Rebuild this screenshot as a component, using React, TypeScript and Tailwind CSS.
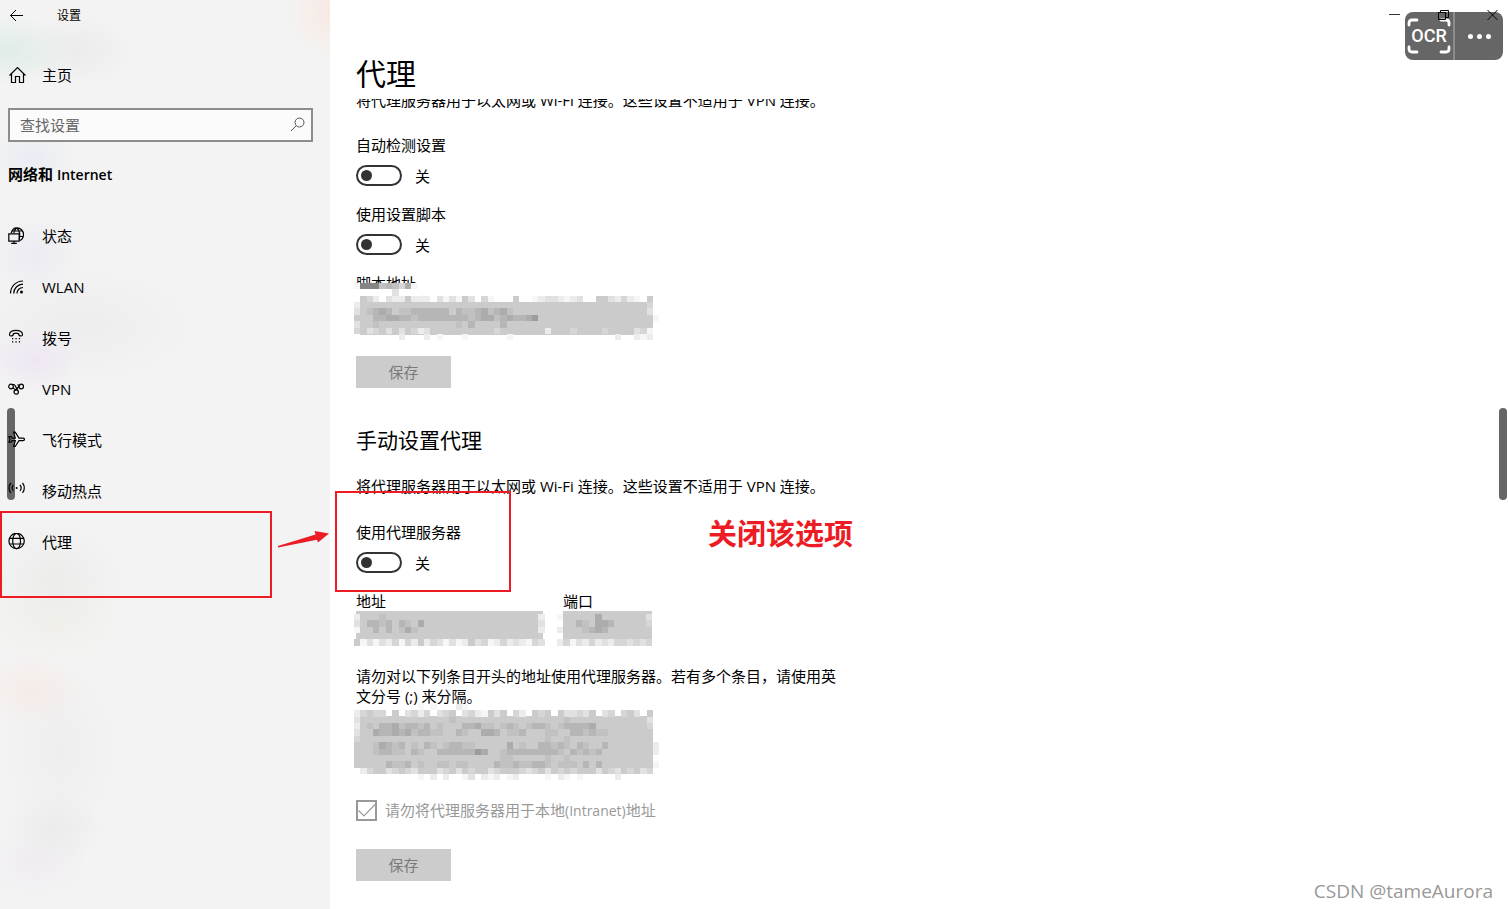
import type { ReactNode } from "react";
import cx from "clsx";

// Grey levels of the pixelated fields, "." and missing cells are empty
const LEVELS: Record<string, string> = {
  "1": "#f6f6f6",
  "2": "#ececec",
  "3": "#e1e1e1",
  "4": "#d6d6d6",
  "5": "#cbcbcb",
  "6": "#c1c1c1",
  "7": "#b6b6b6",
  "8": "#acacac",
  "9": "#9c9c9c",
  x: "#858585",
};

const CELL = 6.36;

const SCRIPT_ROWS = [
  "1xxx676481",
  "......3",
  ".542.3225222.313153.41...5..12332123..5532421.5",
  "25555555555555555555555555555555555555555555554",
  "35678756677777757667867865555555555555555555553",
  "555778877677777777678867877895555555555555555551",
  "35565555555555556575555755555555555555555555555",
  "45345353542355555555554555555525554555545555341",
  ".......2...2.1...1......1................2..212",
];

const ADDRESS_ROWS = [
  "255565555555555555555555555552",
  "357767576585555555555555555553",
  "155757568655555555555555555552",
  ".5555555555555555555555555555.",
  "513132414252431312534124232143",
];

const PORT_ROWS = [
  "155555855555553",
  ".55765887555554",
  "255567875555555",
  ".55555555555555",
  "241324232443434",
];

const BYPASS_ROWS = [
  "..........1.1...21",
  "24544.5.3424.345.3421535.42.545.533435.34.453.5",
  "35555555555555565555555555555555565555555555553",
  "25657786776756555778665676567765677778555555554",
  "35587787867766557655887566755566557767665555555",
  "45555555555555555555555555555565565555555555555",
  "555687675657656776655555856557767657655755555552",
  "555677665765577777798556777777776576767555555552",
  "55555555555555555555555665555565565555555555555",
  "555557667565566566555576676677656665757555555551",
  ".2455345435553453545534555434535454555354354534",
  "..........1.2.2..13.212.12....1.21.1.....2",
];

type MosaicProps = {
  rows: string[];
  className: string;
};

const Mosaic = ({ rows, className }: MosaicProps) => {
  const cols = Math.max(...rows.map((row) => row.length));

  return (
    <svg
      className={cx("absolute pointer-events-none", className)}
      width={cols * CELL}
      height={rows.length * CELL}
      viewBox={`0 0 ${cols} ${rows.length}`}
      shapeRendering="crispEdges"
      aria-hidden="true"
    >
      {rows.map((row, y) =>
        row.split("").map((level, x) =>
          LEVELS[level] ? (
            <rect key={`${x}-${y}`} x={x} y={y} width="1" height="1" fill={LEVELS[level]} />
          ) : null
        )
      )}
    </svg>
  );
};

const Icon = ({ children }: { children: ReactNode }) => (
  <svg
    className="shrink-0"
    width="18"
    height="18"
    viewBox="0 0 18 18"
    fill="none"
    stroke="#000"
    strokeWidth="1.2"
    aria-hidden="true"
  >
    {children}
  </svg>
);

const NAV = [
  {
    label: "状态",
    icon: (
      <>
        <path d="M3.2 6.2C4 2.800 6.300.8 8.800.8a6.600 6.600 0 0 1 6.700 6.700c0 2.800-1.300 5-3.500 6M3.500 4h11.300M8.500 1C6.800 2.500 6 4 5.900 6M9 1c2.600 2.800 3.200 7.500 2.200 11.500M11.500 9.500h3.800" />
        <path d="M.8 6.800h10.400v7.400H.8zM6 14.200v2.200M3.200 16.400h5.600" />
      </>
    ),
  },
  {
    label: "WLAN",
    icon: (
      <>
        <path d="M2.500 15.500C2.500 8.500 8 3 15 3M5.700 15.500c0-5 4-9.300 9.300-9.300M9 15.500c0-3.300 2.700-6 6-6" />
        <circle cx="13.500" cy="14" r="1.500" fill="#000" stroke="none" />
      </>
    ),
  },
  {
    label: "拨号",
    icon: (
      <>
        <path d="M1.500 5.500C1.500 2.700 4.800 1.300 8 1.300s6.500 1.400 6.500 4.200c0 1.100-.5 1.500-1.400 1.500-1.900 0-2.500-.5-2.500-2.300-1.500-.7-3.700-.7-5.200 0C5.400 6.500 4.800 7 2.900 7c-.9 0-1.400-.4-1.400-1.500z" />
        <path
          d="M4 9.600h1.300M7.400 9.600h1.300M10.800 9.600h1.300M4 12.800h1.300M7.400 12.800h1.300M10.800 12.800h1.300"
          strokeWidth="1.300"
        />
      </>
    ),
  },
  {
    label: "VPN",
    icon: (
      <>
        <circle cx="3" cy="6.500" r="2.300" />
        <circle cx="13.200" cy="6.500" r="2.300" />
        <circle cx="8.200" cy="12" r="2.200" />
        <path d="M4.200 4.500h1.200c.8 0 1.200.3 1.600 1l2.700 4.700M5 7.600l1.500 1.500c.8.700 1.500.6 2.200-.1l3.300-3.800M6.800 10.400l1-1.200M9.200 5h2.500" />
      </>
    ),
  },
  {
    label: "飞行模式",
    icon: (
      <path d="M1 5.500h2l1.300 1.600h3L5.600 1.200h1.600l3.800 5.900h4c1 0 1.500.5 1.500 1.200s-.5 1.300-1.500 1.300h-4l-3.800 5.900H5.600l1.700-5.900h-3L3 11.200H1l1-2.900z" />
    ),
  },
  {
    label: "移动热点",
    icon: (
      <>
        <path d="M2.800 1C.4 3.800.4 8.100 2.800 10.900M5.300 3c-1.400 1.700-1.400 4.200 0 5.900M12 3c1.400 1.700 1.400 4.200 0 5.900M14.500 1c2.400 2.800 2.400 7.100 0 9.900" />
        <circle cx="8.600" cy="6" r="1" fill="#000" stroke="none" />
      </>
    ),
  },
  {
    label: "代理",
    icon: (
      <>
        <circle cx="8.600" cy="8" r="7.700" />
        <ellipse cx="8.600" cy="8" rx="3.900" ry="7.700" />
        <path d="M1.600 5.300h14M1.600 11h14" />
      </>
    ),
  },
];

const Sidebar = () => (
  <aside className="relative w-[330px] shrink-0 bg-[#f3f3f3] bg-[radial-gradient(circle_at_334px_12px,#f8e9e1_0px,transparent_48px),radial-gradient(ellipse_60px_36px_at_8px_50px,#dfece8_0px,transparent_100%),radial-gradient(ellipse_60px_36px_at_75px_50px,#ebebeb_0px,transparent_100%),radial-gradient(ellipse_44px_30px_at_32px_156px,#e9ecf4_0px,transparent_100%),radial-gradient(ellipse_50px_40px_at_34px_256px,#ecebf3_0px,transparent_100%),radial-gradient(ellipse_50px_34px_at_34px_360px,#eee7f3_0px,transparent_100%),radial-gradient(ellipse_120px_60px_at_80px_325px,#eeeded_0px,transparent_100%),radial-gradient(ellipse_70px_60px_at_55px_580px,#ececeb_0px,transparent_100%),radial-gradient(ellipse_70px_40px_at_55px_622px,#f1f0ea_0px,transparent_100%),radial-gradient(ellipse_50px_36px_at_32px_690px,#f6ebe7_0px,transparent_100%),radial-gradient(ellipse_60px_90px_at_60px_750px,#eeeeee_0px,transparent_100%),radial-gradient(ellipse_50px_40px_at_55px_828px,#ebebeb_0px,transparent_100%),radial-gradient(ellipse_50px_36px_at_36px_862px,#f0ecf2_0px,transparent_100%)]">
    <div className="absolute left-[7px] top-[408px] w-2 h-[92px] rounded-full bg-[#666]" />

    <div className="relative">
      <header className="flex items-center h-8 pl-[9px]">
        <button type="button" aria-label="返回" className="w-4 h-4">
          <svg width="16" height="16" viewBox="0 0 16 16" fill="none" stroke="#000" aria-hidden="true">
            <path d="M14 7.500H1.500M7 2L1.500 7.500 7 13" />
          </svg>
        </button>
        <span className="ml-8 text-xs">设置</span>
      </header>

      <a href="#home" className="flex items-center h-5 mt-[33px] pl-2 gap-4">
        <Icon>
          <path d="M1.500 9.500L9.500 1.500l8 8M3.500 8v8.500h4v-6h4v6h4V8" />
        </Icon>
        主页
      </a>

      <form className="relative mt-[23px] ml-2 mr-[17px]">
        <input
          type="search"
          aria-label="查找设置"
          placeholder="查找设置"
          className="block w-full h-[34px] border-2 border-[#8c8c8c] bg-[#fbfbfb] pl-[10px] pr-9 text-[15px] placeholder:text-[#666] outline-none"
        />
        <svg
          className="absolute right-2 top-[9px]"
          width="15"
          height="15"
          viewBox="0 0 15 15"
          fill="none"
          stroke="#555"
          aria-hidden="true"
        >
          <circle cx="9.500" cy="5.500" r="4.500" />
          <path d="M6.300 8.700L1 14" />
        </svg>
      </form>

      <h2 className="mt-[22px] pl-2 font-bold">
        网络和 <span className="text-sm font-semibold">Internet</span>
      </h2>

      <nav className="mt-[25px]">
        <ul>
          {NAV.map(({ label, icon }) => (
            <li key={label}>
              <a href={`#${label}`} className="flex items-center h-[51px] pl-2 gap-4">
                <Icon>{icon}</Icon>
                {label}
              </a>
            </li>
          ))}
        </ul>
      </nav>
    </div>
  </aside>
);

const Toggle = ({ id, label }: { id: string; label: string }) => (
  <div>
    <label htmlFor={id} className="block">
      {label}
    </label>
    <div className="flex items-center mt-[10px] h-[21px] gap-[13px]">
      <input
        id={id}
        type="checkbox"
        role="switch"
        className="relative appearance-none w-[46px] h-[21px] rounded-full border-2 border-[#333] bg-white before:absolute before:left-[3px] before:top-[3px] before:size-[11px] before:rounded-full before:bg-[#333]"
      />
      <span>关</span>
    </div>
  </div>
);

const SaveButton = () => (
  <button type="button" disabled className="block w-[95px] h-8 bg-[#ccc] text-[#7a7a7a]">
    保存
  </button>
);

const Main = () => (
  <main className="flex-1 min-w-0 pl-[26px] pt-14">
    <h1 className="text-[30px] leading-9">代理</h1>

    <div className="mt-[7px] overflow-hidden">
      <p className="-mt-[9px]">将代理服务器用于以太网或 Wi-Fi 连接。这些设置不适用于 VPN 连接。</p>
    </div>

    <section className="mt-[25px]">
      <div className="flex flex-col gap-[18px]">
        <Toggle id="auto-detect" label="自动检测设置" />
        <Toggle id="use-script" label="使用设置脚本" />
      </div>

      <div className="relative mt-[18px]">
        <label htmlFor="script-address" className="block h-[10px] overflow-hidden">
          脚本地址
        </label>
        <input
          id="script-address"
          type="text"
          disabled
          className="block mt-5 ml-1 w-[292px] h-8 bg-[#ccc]"
        />
        <Mosaic rows={SCRIPT_ROWS} className="-left-[2px] top-[10px]" />
      </div>

      <div className="mt-[21px]">
        <SaveButton />
      </div>
    </section>

    <section className="mt-[38px]">
      <h2 className="text-[21px] leading-7">手动设置代理</h2>
      <p className="mt-[22px] mb-[26px]">
        将代理服务器用于以太网或 Wi-Fi 连接。这些设置不适用于 VPN 连接。
      </p>
      <Toggle id="use-proxy" label="使用代理服务器" />

      <div className="flex gap-5 mt-[18px]">
        <div className="relative w-[187px]">
          <label htmlFor="address" className="block">
            地址
          </label>
          <input id="address" type="text" disabled className="block w-full h-[30px] bg-[#ccc]" />
          <Mosaic rows={ADDRESS_ROWS} className="-left-[2px] top-[23px]" />
        </div>
        <div className="relative w-[89px]">
          <label htmlFor="port" className="block">
            端口
          </label>
          <input id="port" type="text" disabled className="block w-full h-[30px] bg-[#ccc]" />
          <Mosaic rows={PORT_ROWS} className="-left-[6px] top-[23px]" />
        </div>
      </div>

      <div className="relative mt-[25px]">
        <label htmlFor="bypass" className="block max-w-[480px]">
          请勿对以下列条目开头的地址使用代理服务器。若有多个条目，请使用英文分号 (;) 来分隔。
        </label>
        <textarea
          id="bypass"
          disabled
          className="block mt-[10px] ml-1 w-[292px] h-[54px] resize-none bg-[#ccc]"
        />
        <Mosaic rows={BYPASS_ROWS} className="-left-[2px] top-[38px]" />
      </div>

      <div className="relative flex items-center mt-[30px] gap-2 text-[#999]">
        <input
          id="skip-local"
          type="checkbox"
          defaultChecked
          disabled
          className="appearance-none size-[21px] border-2 border-[#999]"
        />
        <svg
          className="absolute left-0 top-0 pointer-events-none"
          width="21"
          height="21"
          viewBox="0 0 21 21"
          fill="none"
          stroke="#999"
          strokeWidth="1.200"
          aria-hidden="true"
        >
          <path d="M2.500 10.500L8 16 19 4.500" />
        </svg>
        <label htmlFor="skip-local">
          请勿将代理服务器用于本地<span className="text-sm">(Intranet)</span>地址
        </label>
      </div>

      <div className="mt-7">
        <SaveButton />
      </div>
    </section>
  </main>
);

const OcrBar = () => (
  <div className="absolute right-[5px] top-3 flex w-[98px] h-12 rounded-lg bg-[#666] text-white">
    <button
      type="button"
      className="relative flex-1 flex items-center justify-center border-r-2 border-[#8c8c8c] font-[Roboto] text-lg font-medium"
    >
      <svg
        className="absolute left-[2px] top-[6px]"
        width="44"
        height="36"
        viewBox="0 0 44 36"
        fill="none"
        stroke="#fff"
        strokeWidth="2.800"
        strokeLinecap="round"
        aria-hidden="true"
      >
        <path d="M2 7V5q0-3 3-3h5M34 2h5q3 0 3 3v2M42 29v2q0 3-3 3h-5M10 34H5q-3 0-3-3v-2" />
      </svg>
      OCR
    </button>
    <button type="button" aria-label="更多" className="w-12 flex items-center justify-center gap-1">
      <span className="size-[5px] rounded-full bg-white" />
      <span className="size-[5px] rounded-full bg-white" />
      <span className="size-[5px] rounded-full bg-white" />
    </button>
  </div>
);

const WindowControls = () => (
  <div className="absolute right-[9px] top-2 flex gap-9">
    <button type="button" aria-label="最小化" className="size-[13px]">
      <svg width="13" height="13" viewBox="0 0 13 13" stroke="#333" aria-hidden="true">
        <path d="M1 6.500h11" />
      </svg>
    </button>
    <button type="button" aria-label="还原" className="size-[13px]">
      <svg width="13" height="13" viewBox="0 0 13 13" fill="none" stroke="#000" aria-hidden="true">
        <path d="M1.500 4.500h7v7h-7zM3.500 4.500v-2h8v7h-3" />
      </svg>
    </button>
    <button type="button" aria-label="关闭" className="size-[13px]">
      <svg width="13" height="13" viewBox="0 0 13 13" stroke="#000" aria-hidden="true">
        <path d="M1.500 2l10 10M11.500 2l-10 10" />
      </svg>
    </button>
  </div>
);

// Red marks drawn over the settings window
const Annotations = () => (
  <div className="text-[#ed1c24]">
    <div className="absolute left-0 top-[511px] w-[272px] h-[87px] border-2 border-current pointer-events-none" />
    <div className="absolute left-[335px] top-[491px] w-[176px] h-[101px] border-2 border-current pointer-events-none" />
    <svg
      className="absolute left-[277px] top-[530px]"
      width="53"
      height="18"
      viewBox="0 0 53 18"
      fill="currentColor"
      aria-hidden="true"
    >
      <path d="M1 16L38.500 4.500 37.500 1 52 3.600 41 12.500 40 9.800 1 17.500z" />
    </svg>
    <p className="absolute left-[708px] top-[514px] text-[29px] leading-10 font-bold whitespace-nowrap">
      关闭该选项
    </p>
  </div>
);

const App = () => (
  <div className="relative flex min-h-screen overflow-hidden bg-white text-black text-[15px] leading-5 font-['Open_Sans','Noto_Sans_CJK_SC',sans-serif]">
    <Sidebar />
    <Main />
    <OcrBar />
    <WindowControls />
    <div className="absolute right-[1px] top-[408px] w-2 h-[92px] rounded-full bg-[#666]" />
    <Annotations />
    <p className="absolute right-[15px] bottom-1 text-[19px] leading-7 text-[#999] [text-shadow:1px_1px_0_#fff]">
      CSDN @tameAurora
    </p>
  </div>
);

export default App;
